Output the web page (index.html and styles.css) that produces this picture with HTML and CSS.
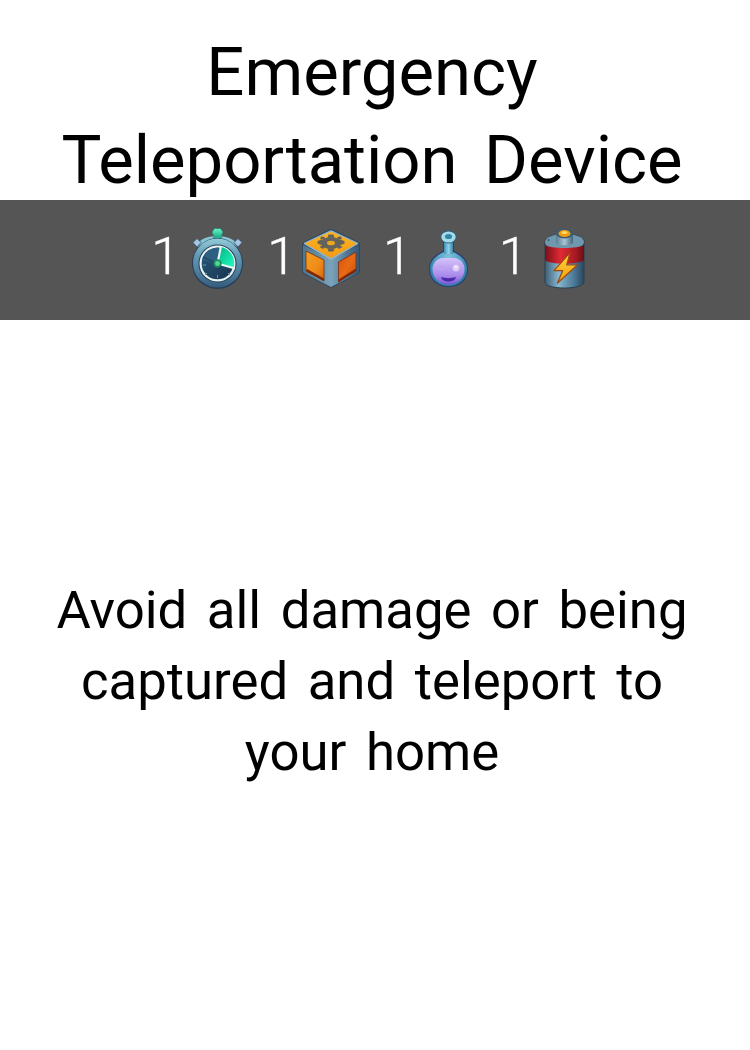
FILE: index.html
```html
<!DOCTYPE html>
<html lang="en">
<head>
<meta charset="utf-8">
<title>Emergency Teleportation Device</title>
<link rel="stylesheet" href="styles.css">
</head>
<body>
<main class="card">
  <h1 class="title">Emergency<br>Teleportation Device</h1>
  <section class="costs">
    <div class="cost"><span class="num">1</span>
      <svg class="icon" viewBox="0 0 62 62" aria-label="time">
        <defs>
          <linearGradient id="wbody" x1="0" y1="0" x2="0" y2="1"><stop offset="0" stop-color="#93cbd9"/><stop offset=".35" stop-color="#6299b2"/><stop offset=".75" stop-color="#4a7898"/><stop offset="1" stop-color="#345a7c"/></linearGradient>
          <linearGradient id="wgreen" x1="0" y1="0" x2="1" y2="1"><stop offset="0" stop-color="#08b088"/><stop offset=".6" stop-color="#12e0a6"/><stop offset="1" stop-color="#35f8cc"/></linearGradient>
          <linearGradient id="wdial" x1="0" y1="0" x2="1" y2="1"><stop offset="0" stop-color="#2a5a7a"/><stop offset="1" stop-color="#173450"/></linearGradient>
          <linearGradient id="wgem" x1="0" y1="0" x2="0" y2="1"><stop offset="0" stop-color="#6af5c8"/><stop offset="1" stop-color="#10a07c"/></linearGradient>
        </defs>
        <path d="M12 17C17 11 24 9 32 9s15 2 21 8l-3 6H14z" fill="#86c6d6"/>
        <path d="M8 15.500L12 11.500l4 4L12 20zM49 15.500L53 11.500l4 4L53 20z" fill="#a8c6e6" stroke="#33506b" stroke-width=".8"/>
        <path d="M27 5L29.500 1.500h6L38 5l-2.500 7h-6z" fill="url(#wgem)" stroke="#2a6a70" stroke-width=".6"/>
        <circle cx="32.500" cy="36.500" r="25.500" fill="#243f58"/>
        <circle cx="32.500" cy="36" r="24.500" fill="url(#wbody)"/>
        <circle cx="32.500" cy="36.500" r="19" fill="#1d3c55"/>
        <circle cx="32.500" cy="36.500" r="18" fill="#e8f2f2"/>
        <circle cx="32.500" cy="36.500" r="15.800" fill="url(#wdial)"/>
        <path d="M32.500 36.500L36 20A16.500 16.500 0 0 1 48.500 41z" fill="url(#wgreen)"/>
        <path d="M32.500 36.500L17 33A16 16 0 0 1 36 21z" fill="#2c5f82"/>
        <path d="M32.500 36.500L36 19M32.500 36.500L50 41.500" stroke="#e8f4f0" stroke-width="2.200"/>
        <path d="M32.500 36.500L18 30" stroke="#234a68" stroke-width="1.500"/>
        <path d="M32.500 48v3M22 46l-2 2M43 46l2 2M21 38h-3" stroke="#6f97ad" stroke-width="1"/>
        <circle cx="32.500" cy="36.500" r="4.200" fill="#1a8a62"/>
        <circle cx="32.500" cy="36.500" r="2.400" fill="#57d893"/>
      </svg>
    </div>
    <div class="cost"><span class="num">1</span>
      <svg class="icon" viewBox="0 0 62 62" aria-label="parts">
        <defs>
          <linearGradient id="bl" x1="0" y1="0" x2="1" y2="1"><stop offset="0" stop-color="#f5a01f"/><stop offset=".6" stop-color="#ee8a18"/><stop offset="1" stop-color="#d4620e"/></linearGradient>
          <linearGradient id="br" x1="0" y1="0" x2="1" y2="1"><stop offset="0" stop-color="#d4500f"/><stop offset=".5" stop-color="#e96a14"/><stop offset="1" stop-color="#c04a0c"/></linearGradient>
          <linearGradient id="bf" x1="0" y1="0" x2="1" y2="0"><stop offset="0" stop-color="#4f7690"/><stop offset=".5" stop-color="#7ba3ba"/><stop offset="1" stop-color="#35587a"/></linearGradient>
          <linearGradient id="bt" x1="0" y1="0" x2="0" y2="1"><stop offset="0" stop-color="#ffb425"/><stop offset="1" stop-color="#f29b14"/></linearGradient>
        </defs>
        <path d="M3 14.500L28 2.500Q30 1.500 32 2.500L57 14.500Q59 15.500 59 18V44Q59 46 57 47L32 60Q30 61 28 60L3 47Q1 46 1 44V18Q1 15.500 3 14.500z" fill="#2e4a61"/>
        <path d="M2 18L30 32 58 18V44Q58 45.500 56.500 46.300L30 60 3.500 46.300Q2 45.500 2 44z" fill="url(#bf)"/>
        <path d="M5 24L23 33V54L5 44z" fill="url(#bl)" stroke="#7a2e0e" stroke-width=".8"/>
        <path d="M37.500 35L55 25V44L37.500 55z" fill="url(#br)" stroke="#7a2e0e" stroke-width=".8"/>
        <path d="M5 44l18 10v-2.500L6 42z" fill="#7d260a"/>
        <path d="M37.500 55L55 44v-2.500L37.500 52.500z" fill="#7d260a"/>
        <path d="M29 3.500Q30 3 31 3.500L56.500 15.500Q58 16.500 56.500 17.500L31 32.500Q30 33 29 32.500L3.500 17.500Q2 16.500 3.500 15.500z" fill="#8fb2c4"/>
        <path d="M29 5Q30 4.500 31 5L55 16Q56 16.500 55 17L31 30.500Q30 31 29 30.500L5 17Q4 16.500 5 16z" fill="url(#bt)"/>
        <g fill="#62635a">
          <ellipse cx="30" cy="16" rx="10" ry="6"/>
          <path d="M27.500 7.500h5l1 3h-7zM27.500 24.500h5l1-3h-7zM16.500 14l4.500-1.500 1.500 2.500-2.500 3-3.500-1.500zM43.500 14L39 12.500 37.500 15l2.500 3 3.500-1.500zM18.500 20l3.500-2.500 2.500 2-2.500 2.500zM41.500 20L38 17.500l-2.500 2 2.500 2.500zM20 9.500l4 .500-1 3-4-1zM40 9.500l-4 .500 1 3 4-1z"/>
        </g>
        <ellipse cx="30" cy="16" rx="4" ry="2.300" fill="#eba51e"/>
      </svg>
    </div>
    <div class="cost"><span class="num">1</span>
      <svg class="icon" viewBox="0 0 62 62" aria-label="science">
        <defs>
          <linearGradient id="fneck" x1="0" y1="0" x2="1" y2="0"><stop offset="0" stop-color="#3f8fb8"/><stop offset=".5" stop-color="#8fd2e6"/><stop offset="1" stop-color="#3a84ab"/></linearGradient>
          <linearGradient id="fliq" x1="0" y1="0" x2="0" y2="1"><stop offset="0" stop-color="#d4c2f8"/><stop offset=".65" stop-color="#a98ceb"/><stop offset="1" stop-color="#7a58d4"/></linearGradient>
          <radialGradient id="fglass" cx=".5" cy=".4" r=".6"><stop offset="0" stop-color="#7fc4de"/><stop offset="1" stop-color="#2f7ea8"/></radialGradient>
        </defs>
        <path d="M26 12h11v12c7 3 14 8 14 18 0 11-8 18-19.500 18S12 53 12 42c0-10 7-15 14-18z" fill="#2b3f70"/>
        <path d="M27 12h9v13c7 3 14 8 14 17 0 10-8 17-18.500 17S13 52 13 42c0-9 7-14 14-17z" fill="url(#fglass)"/>
        <rect x="27" y="12" width="9" height="15" fill="url(#fneck)"/>
        <ellipse cx="31.500" cy="10" rx="8" ry="6.500" fill="#2b5f83"/>
        <ellipse cx="31.500" cy="10" rx="7.200" ry="5.600" fill="#a6dcea"/>
        <ellipse cx="31.500" cy="9.500" rx="3.600" ry="2.600" fill="#3587a8"/>
        <path d="M15.500 42c0-6 5-11 10-11h12c5 0 10 5 10 11 0 9-7 15.500-16 15.500S15.500 51 15.500 42z" fill="url(#fliq)"/>
        <path d="M24 50c3 1.500 12 1.500 15 0-1 3.500-4 4.500-7.500 4.500S25 53.500 24 50z" fill="#4a28a8"/>
        <circle cx="39" cy="41" r="3.500" fill="#ddc8f7"/><circle cx="39" cy="40" r="1.700" fill="#f5e8ff"/>
        <circle cx="24" cy="41" r="2.800" fill="#bda2f2"/>
      </svg>
    </div>
    <div class="cost"><span class="num">1</span>
      <svg class="icon" viewBox="0 0 62 62" aria-label="energy">
        <defs>
          <linearGradient id="cyl" x1="0" y1="0" x2="1" y2="0"><stop offset="0" stop-color="#3d5f78"/><stop offset=".35" stop-color="#88b6cc"/><stop offset=".75" stop-color="#4a7896"/><stop offset="1" stop-color="#2c465c"/></linearGradient>
          <linearGradient id="red" x1="0" y1="0" x2="1" y2="0"><stop offset="0" stop-color="#7a1018"/><stop offset=".4" stop-color="#e02a34"/><stop offset=".8" stop-color="#a31820"/><stop offset="1" stop-color="#6a0e14"/></linearGradient>
          <linearGradient id="bolt" x1="0" y1="0" x2="0" y2="1"><stop offset="0" stop-color="#ffd83a"/><stop offset="1" stop-color="#f39a10"/></linearGradient>
          <linearGradient id="cap" x1="0" y1="0" x2="1" y2="0"><stop offset="0" stop-color="#5b7d94"/><stop offset=".5" stop-color="#a7c4d1"/><stop offset="1" stop-color="#45657d"/></linearGradient>
        </defs>
        <path d="M12 15c0-5 9-8 19.500-8S51 10 51 15v40c0 4-9 6-19.500 6S12 59 12 55z" fill="url(#cyl)" stroke="#2a3f52" stroke-width="1"/>
        <path d="M12 15c0 5 9 7 19.500 7S51 20 51 15s-9-8-19.500-8S12 10 12 15z" fill="#6f97ad"/>
        <circle cx="15.500" cy="13" r="1" fill="#35566e"/>
        <path d="M12 18c5 4 34 4 39 0v15c-5 5-34 5-39 0z" fill="url(#red)"/>
        <path d="M23 6h17v10c-3 3-14 3-17 0z" fill="url(#cap)"/>
        <ellipse cx="31.500" cy="6.500" rx="8.500" ry="5" fill="#3e5a6e"/>
        <ellipse cx="31.500" cy="6.500" rx="6" ry="3.600" fill="#ef9c12"/>
        <ellipse cx="31.500" cy="5.500" rx="3" ry="1.600" fill="#ffd860"/>
        <path d="M37 25.700L21 43.700H29.700L24.300 56.300 44.300 38H33.700z" fill="url(#bolt)" stroke="#a0480e" stroke-width="1.200" stroke-linejoin="round"/>
      </svg>
    </div>
  </section>
  <p class="desc">Avoid all damage or being<br>captured and teleport to<br>your home</p>
</main>
</body>
</html>
```
FILE: styles.css
```css
html, body {
  margin: 0;
  padding: 0;
  background: #fff;
}
.card {
  width: 750px;
  height: 1050px;
  display: flex;
  flex-direction: column;
  font-family: Roboto, "Liberation Sans", sans-serif;
  color: #000;
  overflow: hidden;
}
.title {
  margin: 0;
  height: 200px;
  padding: 28px 6px 0 0;
  box-sizing: border-box;
  font-size: 67px;
  font-weight: 400;
  line-height: 88px;
  word-spacing: 10px;
  text-align: center;
}
.costs {
  height: 120px;
  padding-right: 4px;
  background: #555;
  display: flex;
  justify-content: center;
  align-items: center;
  gap: 20px;
}
.cost {
  display: flex;
  align-items: center;
  gap: 5px;
}
.num {
  color: #fff;
  font-size: 52px;
  font-weight: 300;
  line-height: 60px;
  padding-bottom: 7px;
  -webkit-text-stroke: 0.4px #fff;
}
.icon {
  width: 62px;
  height: 62px;
  display: block;
  margin-bottom: 4px;
}
.desc {
  margin: 0;
  padding: 255px 6px 0 0;
  font-size: 52.7px;
  line-height: 71px;
  font-weight: 400;
  word-spacing: 6.5px;
  text-align: center;
}
```
